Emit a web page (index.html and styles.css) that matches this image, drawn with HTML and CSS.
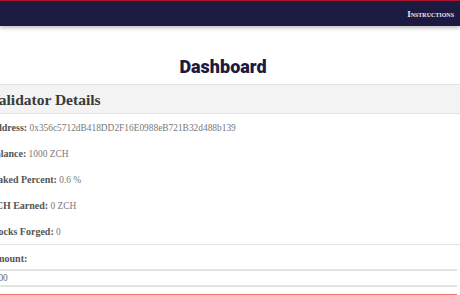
FILE: index.html
```html
<html>

<head>
    <title>Dashboard</title>
    <link rel="stylesheet" href="styles.css">
</head>

<body>

    <div class="navbar">
        <a class="navlink" href="#">Instructions</a>
    </div>

    <h1 class="title">Dashboard</h1>

    <div class="card">
        <div class="card-header">Validator Details</div>
        <div class="card-body">
            <p class="row"><b>Address:</b> 0x356c5712dB418DD2F16E0988eB721B32d488b139</p>
            <p class="row"><b>Balance:</b> 1000 ZCH</p>
            <p class="row"><b>Staked Percent:</b> 0.6 %</p>
            <p class="row"><b>ZCH Earned:</b> 0 ZCH</p>
            <p class="row"><b>Blocks Forged:</b> 0</p>
        </div>
        <div class="stake-form">
            <label class="label" for="amount">Amount:</label>
            <input id="amount" class="amount" type="text" value="1000">
            <button class="stakebtn">Stake</button>
        </div>
    </div>

</body>

</html>
```

FILE: styles.css
```css
body {
    margin: 0;
    background-color: #fff;
    font-family: 'Liberation Serif', serif;
    overflow: hidden;
}

.navbar {
    border-top: 1px solid #a8142c;
    background-color: #1c1a40;
    height: 25px;
    display: flex;
    justify-content: flex-end;
    align-items: center;
    padding-right: 6px;
    box-shadow: 0 2px 4px rgba(0, 0, 0, 0.25);
}

.navlink {
    color: #e8e8f0;
    font-variant: small-caps;
    font-size: 9px;
    font-weight: bold;
    text-decoration: none;
}

.title {
    margin: 30px 0 0 0;
    height: 28px;
    text-align: center;
    font-family: 'Roboto', sans-serif;
    font-weight: 900;
    font-size: 18px;
    color: #1c1a40;
    padding-right: 14px;
}

.card {
    margin-left: -22px;
    width: 490px;
    border-top: 1px solid #e2e2e2;
}

.card-header {
    background-color: #f3f3f3;
    height: 28px;
    line-height: 30px;
    padding-left: 11px;
    font-size: 15.5px;
    font-weight: bold;
    color: #3a3a3a;
    border-bottom: 1px solid #e2e2e2;
}

.card-body {
    padding: 8px 0 0 11px;
    border-bottom: 1px solid #e2e2e2;
    height: 122px;
}

.row {
    margin: 0;
    height: 26px;
    line-height: 12px;
    font-size: 9.4px;
    color: #777;
}

.row b {
    font-size: 10px;
    color: #555;
}

.stake-form {
    padding: 8px 0 0 11px;
}

.label {
    display: block;
    font-size: 10px;
    font-weight: bold;
    color: #555;
    height: 16px;
}

.amount {
    display: block;
    box-sizing: border-box;
    margin-left: -11px;
    width: 100%;
    height: 18px;
    border: 0;
    border-top: 2px solid #e4e4e4;
    border-bottom: 2px solid #e4e4e4;
    padding-left: 11px;
    font-family: 'Liberation Serif', serif;
    font-size: 9.4px;
    color: #666;
}

.stakebtn {
    display: block;
    margin: 7px 0 0 -11px;
    width: 100%;
    height: 30px;
    background-color: #fff;
    border: 0;
    border-top: 2px solid #f07070;
}
```
